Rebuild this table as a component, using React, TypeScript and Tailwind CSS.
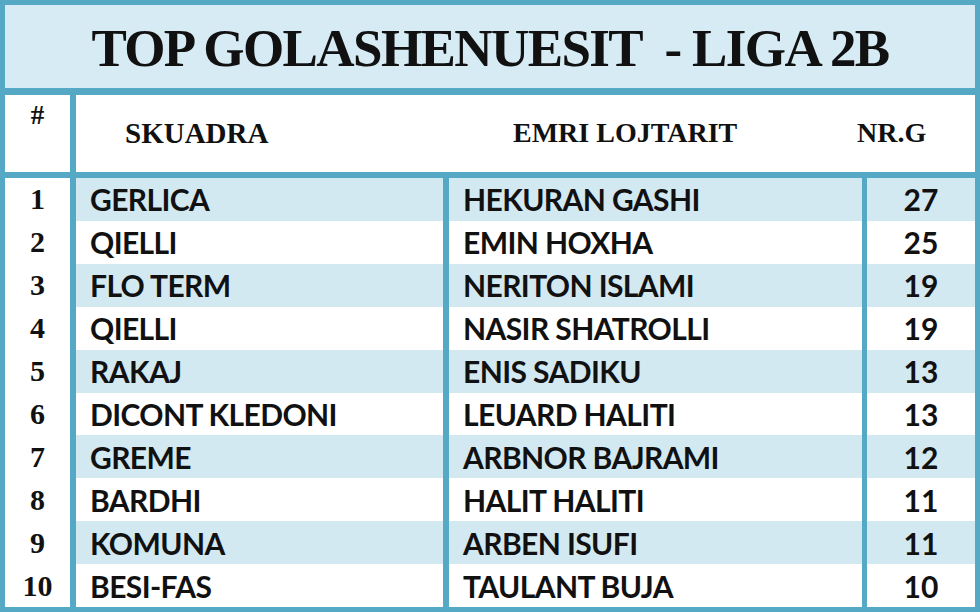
import React from "react";

const rows: [string, string, string, number][] = [
  ["1", "GERLICA", "HEKURAN GASHI", 27],
  ["2", "QIELLI", "EMIN HOXHA", 25],
  ["3", "FLO TERM", "NERITON ISLAMI", 19],
  ["4", "QIELLI", "NASIR SHATROLLI", 19],
  ["5", "RAKAJ", "ENIS SADIKU", 13],
  ["6", "DICONT KLEDONI", "LEUARD HALITI", 13],
  ["7", "GREME", "ARBNOR BAJRAMI", 12],
  ["8", "BARDHI", "HALIT HALITI", 11],
  ["9", "KOMUNA", "ARBEN ISUFI", 11],
  ["10", "BESI-FAS", "TAULANT BUJA", 10],
];

const serif = { fontFamily: '"Liberation Serif", "Times New Roman", serif' };
const sans = { fontFamily: 'Lato, "Open Sans", sans-serif' };

export default function App() {
  return (
    <div className="w-[980px] h-[612px] bg-[#56a9c4] p-[5px] flex flex-col text-[#111]">
      {/* Title */}
      <div className="h-[83px] bg-[#d6ebf3] flex items-center justify-center pt-[4px]">
        <h1
          className="text-[53px] font-bold tracking-[-1.6px] leading-none whitespace-pre"
          style={serif}
        >
          TOP GOLASHENUESIT  - LIGA 2B
        </h1>
      </div>

      {/* Header */}
      <div className="mt-[7px] h-[77px] flex gap-[6px]">
        <div className="w-[65px] bg-white flex justify-center pt-[7px]">
          <span className="text-[27px] font-bold leading-none" style={serif}>
            #
          </span>
        </div>
        <div
          className="flex-1 bg-white grid grid-cols-[437px_344px_1fr] pt-[24px] text-[28px] font-bold leading-none"
          style={serif}
        >
          <span className="pl-[49px] text-[29px]">SKUADRA</span>
          <span>EMRI LOJTARIT</span>
          <span>NR.G</span>
        </div>
      </div>

      {/* Body */}
      <div className="mt-[6px] flex-1 flex gap-[6px]">
        <div className="w-[65px] bg-white grid grid-rows-10">
          {rows.map((r) => (
            <div
              key={r[0]}
              className="flex items-center justify-center text-[30px] font-bold leading-none"
              style={serif}
            >
              {r[0]}
            </div>
          ))}
        </div>
        <div className="w-[367px] bg-white grid grid-rows-10">
          {rows.map((r, i) => (
            <div
              key={r[0]}
              className={`flex items-center pl-[14px] text-[30px] font-bold leading-none tracking-[-0.6px] ${
                i % 2 === 0 ? "bg-[#d3e9f2]" : "bg-white"
              }`}
              style={sans}
            >
              {r[1]}
            </div>
          ))}
        </div>
        <div className="w-[413px] bg-white grid grid-rows-10">
          {rows.map((r, i) => (
            <div
              key={r[0]}
              className={`flex items-center pl-[14px] text-[30px] font-bold leading-none tracking-[-0.6px] ${
                i % 2 === 0 ? "bg-[#d3e9f2]" : "bg-white"
              }`}
              style={sans}
            >
              {r[2]}
            </div>
          ))}
        </div>
        <div className="flex-1 ml-[-1px] bg-white grid grid-rows-10">
          {rows.map((r, i) => (
            <div
              key={r[0]}
              className={`flex items-center justify-center text-[30px] font-bold leading-none ${
                i % 2 === 0 ? "bg-[#d3e9f2]" : "bg-white"
              }`}
              style={sans}
            >
              {r[3]}
            </div>
          ))}
        </div>
      </div>
    </div>
  );
}
